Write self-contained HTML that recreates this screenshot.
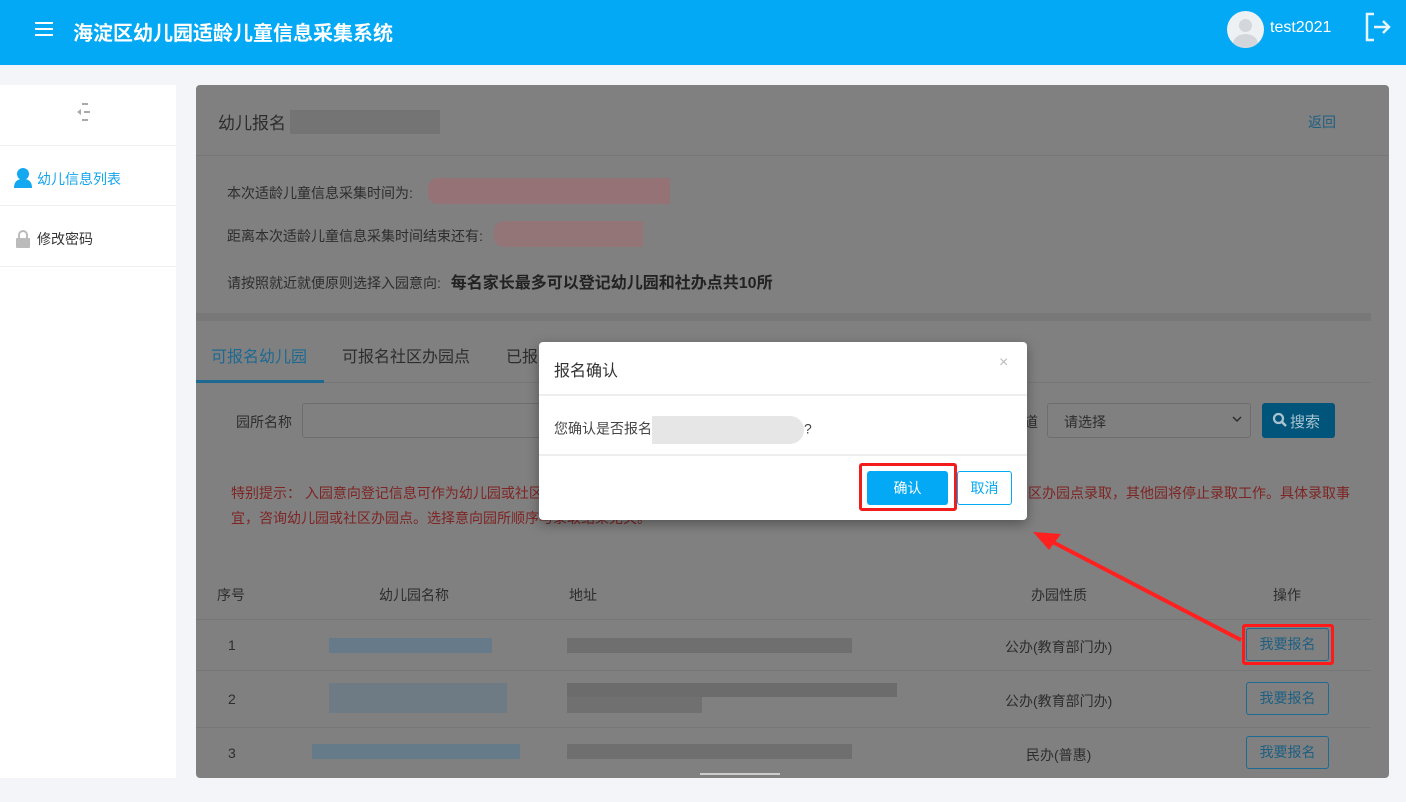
<!DOCTYPE html>
<html><head><meta charset="utf-8"><style>
*{margin:0;padding:0;box-sizing:border-box}
body{width:1406px;height:802px;background:#f4f5f9;font-family:"Liberation Sans","Noto Sans CJK SC",sans-serif;position:relative;overflow:hidden;font-size:14px;color:#333}
.a{position:absolute;white-space:nowrap}
.hd{left:0;top:0;width:1406px;height:65px;background:#03a9f4}
.side{left:0;top:85px;width:176px;height:693px;background:#fff}
.panel{left:196px;top:85px;width:1193px;height:693px;background:#808080;border-radius:4px;overflow:hidden}
.t{color:#2d2d2d}
.btn{width:83px;height:33px;border:1px solid #1d6a92;border-radius:3px;color:#1d5f82;font-size:14px;text-align:center;line-height:31px}
</style></head><body>
<div class="a hd"></div>
<div class="a" style="left:35px;top:22px;width:18px;height:2px;background:#fff;box-shadow:0 6px 0 #fff,0 12px 0 #fff"></div>
<div class="a" style="left:73px;top:17px;font-size:20px;color:#fff;font-weight:600">海淀区幼儿园适龄儿童信息采集系统</div>
<div class="a" style="left:1227px;top:11px;width:37px;height:37px;border-radius:50%;background:#eef1f4;overflow:hidden">
 <div class="a" style="left:12px;top:8px;width:13px;height:13px;border-radius:50%;background:#d3d6da"></div>
 <div class="a" style="left:6px;top:23px;width:25px;height:20px;border-radius:50% 50% 0 0;background:#d3d6da"></div>
</div>
<div class="a" style="left:1270px;top:19px;font-size:16px;color:#fff">test2021</div>
<svg class="a" style="left:1364px;top:12px" width="28" height="30" viewBox="0 0 28 30"><path d="M10 2H3v26h7" fill="none" stroke="#e6f6fe" stroke-width="2.5"/><path d="M10 15h15M19 9l6 6-6 6" fill="none" stroke="#e6f6fe" stroke-width="2.5"/></svg>

<div class="a side"></div>
<svg class="a" style="left:76px;top:102px" width="18" height="20"><path d="M6 2h6M8 10h6M6 18h6" stroke="#aaa" stroke-width="2"/><path d="M1 10l4-3v6z" fill="#aaa"/></svg>
<div class="a" style="left:0;top:145px;width:176px;height:1px;background:#eee"></div>
<div class="a" style="left:0;top:205px;width:176px;height:1px;background:#eee"></div>
<div class="a" style="left:0;top:266px;width:176px;height:1px;background:#eee"></div>
<svg class="a" style="left:13px;top:167px" width="20" height="22"><circle cx="10" cy="7" r="6" fill="#13a8f0"/><path d="M1 21c0-7 4-9 9-9s9 2 9 9z" fill="#13a8f0"/></svg>
<div class="a" style="left:37px;top:169px;color:#14a4ee;font-size:14px">幼儿信息列表</div>
<svg class="a" style="left:15px;top:229px" width="16" height="20"><path d="M4 9V6a4 4 0 018 0v3" fill="none" stroke="#bbb" stroke-width="2"/><rect x="1" y="9" width="14" height="10" rx="1" fill="#bbb"/></svg>
<div class="a" style="left:37px;top:229px;font-size:14px;color:#333">修改密码</div>

<div class="a panel">
 <div class="a t" style="left:22px;top:24px;font-size:17px">幼儿报名</div>
 <div class="a" style="left:94px;top:25px;width:150px;height:24px;background:#747474"></div>
 <div class="a" style="left:1112px;top:27px;color:#1d5f82;font-size:14px">返回</div>
 <div class="a" style="left:0;top:70px;width:1193px;height:1px;background:#767676"></div>
 <div class="a t" style="left:31px;top:98px;font-size:14px">本次适龄儿童信息采集时间为:</div>
 <div class="a" style="left:232px;top:93px;width:242px;height:26px;background:#957276;border-radius:10px 0 0 10px"></div>
 <div class="a t" style="left:31px;top:141px;font-size:14px">距离本次适龄儿童信息采集时间结束还有:</div>
 <div class="a" style="left:298px;top:136px;width:149px;height:26px;background:#937578;border-radius:10px 0 0 10px"></div>
 <div class="a t" style="left:31px;top:184px;font-size:14px">请按照就近就便原则选择入园意向: <b style="font-size:16px;color:#222;margin-left:6px">每名家长最多可以登记幼儿园和社办点共10所</b></div>
 <div class="a" style="left:0;top:228px;width:1175px;height:8px;background:#787878"></div>
 <div class="a" style="left:15px;top:258px;font-size:16px;color:#1e6991">可报名幼儿园</div>
 <div class="a t" style="left:146px;top:258px;font-size:16px">可报名社区办园点</div>
 <div class="a t" style="left:310px;top:258px;font-size:16px">已报名</div>
 <div class="a" style="left:0;top:297px;width:1175px;height:1px;background:#777"></div>
 <div class="a" style="left:0;top:295px;width:128px;height:3px;background:#1e6991"></div>
 <div class="a t" style="left:40px;top:327px;font-size:14px">园所名称</div>
 <div class="a" style="left:106px;top:318px;width:250px;height:35px;border:1px solid #6e6e6e;border-radius:3px"></div>
 <div class="a t" style="left:828px;top:327px;font-size:14px">道</div>
 <div class="a" style="left:851px;top:318px;width:204px;height:35px;border:1px solid #6e6e6e;border-radius:3px;background:#808080"></div>
 <div class="a t" style="left:868px;top:327px;font-size:14px">请选择</div>
 <svg class="a" style="left:1036px;top:330px" width="10" height="8"><path d="M1 2l4 4 4-4" fill="none" stroke="#2d2d2d" stroke-width="1.5"/></svg>
 <div class="a" style="left:1066px;top:318px;width:73px;height:35px;background:#02557a;border-radius:3px"></div>
 <svg class="a" style="left:1076px;top:327px" width="16" height="16"><circle cx="6.5" cy="6.5" r="4.5" fill="none" stroke="#a9c3d1" stroke-width="2.2"/><path d="M10 10l4 4" stroke="#a9c3d1" stroke-width="2.6"/></svg>
 <div class="a" style="left:1094px;top:326px;font-size:15px;color:#a9c3d1">搜索</div>
 <div class="a" style="left:35px;top:398px;font-size:14px;color:#7e2424">特别提示： 入园意向登记信息可作为幼儿园或社区办园点录取依据，一旦被其中一所幼儿园或社</div>
 <div class="a" style="left:832px;top:398px;font-size:14px;color:#7e2424">区办园点录取，其他园将停止录取工作。具体录取事</div>
 <div class="a" style="left:35px;top:423px;font-size:14px;color:#7e2424">宜，咨询幼儿园或社区办园点。选择意向园所顺序与录取结果无关。</div>
 <div class="a t" style="left:21px;top:500px;font-size:14px">序号</div>
 <div class="a t" style="left:183px;top:500px;font-size:14px">幼儿园名称</div>
 <div class="a t" style="left:373px;top:500px;font-size:14px">地址</div>
 <div class="a t" style="left:835px;top:500px;font-size:14px">办园性质</div>
 <div class="a t" style="left:1077px;top:500px;font-size:14px">操作</div>
 <div class="a" style="left:0;top:534px;width:1175px;height:1px;background:#767676"></div>
 <div class="a" style="left:0;top:585px;width:1175px;height:1px;background:#767676"></div>
 <div class="a" style="left:0;top:642px;width:1175px;height:1px;background:#767676"></div>
 <div class="a t" style="left:32px;top:552px">1</div>
 <div class="a" style="left:133px;top:553px;width:163px;height:15px;background:#667a89"></div>
 <div class="a" style="left:371px;top:553px;width:285px;height:15px;background:#6f6f6f"></div>
 <div class="a t" style="left:809px;top:552px">公办(教育部门办)</div>
 <div class="a btn" style="left:1050px;top:543px">我要报名</div>
 <div class="a" style="left:1046px;top:539px;width:92px;height:41px;border:3px solid #ff1a1a;border-radius:3px"></div>
 <div class="a t" style="left:32px;top:606px">2</div>
 <div class="a" style="left:133px;top:598px;width:178px;height:30px;background:#6e7a84"></div>
 <div class="a" style="left:371px;top:598px;width:330px;height:14px;background:#6c6c6c"></div>
 <div class="a" style="left:371px;top:612px;width:135px;height:16px;background:#707070"></div>
 <div class="a t" style="left:809px;top:606px">公办(教育部门办)</div>
 <div class="a btn" style="left:1050px;top:597px">我要报名</div>
 <div class="a t" style="left:32px;top:660px">3</div>
 <div class="a" style="left:116px;top:659px;width:208px;height:15px;background:#657b8a"></div>
 <div class="a" style="left:371px;top:659px;width:285px;height:15px;background:#6f6f6f"></div>
 <div class="a t" style="left:830px;top:660px">民办(普惠)</div>
 <div class="a btn" style="left:1050px;top:651px">我要报名</div>
 <div class="a" style="left:504px;top:688px;width:80px;height:2px;background:#ccc"></div>
</div>

<svg class="a" style="left:1025px;top:525px" width="220" height="120"><path d="M216 115L20 13" stroke="#ff2020" stroke-width="4"/><path d="M8 7l28 2-12 16z" fill="#ff2020"/></svg>

<div class="a" style="left:539px;top:342px;width:488px;height:178px;background:#fff;border-radius:4px;box-shadow:0 4px 12px rgba(0,0,0,.35)">
 <div class="a" style="left:15px;top:15px;font-size:16px;color:#333">报名确认</div>
 <div class="a" style="left:460px;top:12px;font-size:16px;color:#bbb">×</div>
 <div class="a" style="left:0;top:52px;width:488px;height:2px;background:#eee"></div>
 <div class="a" style="left:15px;top:74px;font-size:14px;color:#444">您确认是否报名<span style="display:inline-block;width:152px;height:28px;vertical-align:middle;background:#e6e6e6;border-radius:0 14px 14px 0"></span>?</div>
 <div class="a" style="left:0;top:112px;width:488px;height:2px;background:#eee"></div>
 <div class="a" style="left:328px;top:129px;width:81px;height:34px;background:#03a9f4;border-radius:3px;color:#fff;text-align:center;line-height:34px;font-size:14px">确认</div>
 <div class="a" style="left:320px;top:121px;width:98px;height:48px;border:3px solid #f21c1c;border-radius:3px"></div>
 <div class="a" style="left:418px;top:129px;width:55px;height:34px;border:1px solid #03a9f4;border-radius:3px;color:#03a9f4;text-align:center;line-height:32px;font-size:14px">取消</div>
</div>
</body></html>
